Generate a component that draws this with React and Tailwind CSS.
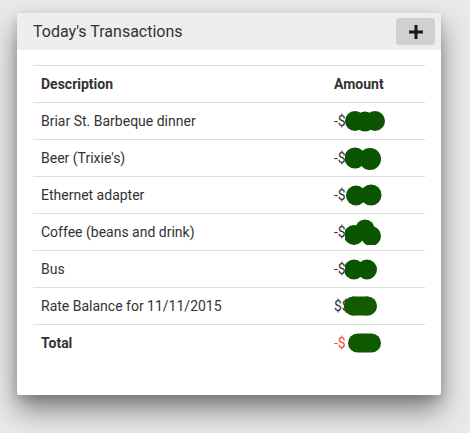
import React from "react";

function Blob({ circles, w = 44, h = 26, color = "#0b5400" }) {
  return (
    <svg width={w} height={h} viewBox={`0 0 ${w} ${h}`} className="block">
      {circles.map((c, i) =>
        c.rect ? (
          <rect key={i} x={c.x} y={c.y} width={c.w} height={c.h} rx={c.h / 2} fill={color} />
        ) : (
          <circle key={i} cx={c.x} cy={c.y} r={c.r} fill={color} />
        )
      )}
    </svg>
  );
}

const rows = [
  { d: "Briar St. Barbeque dinner", p: "-$", blob: [{ x: 10, y: 13, r: 10 }, { x: 20, y: 13.5, r: 10 }, { x: 30, y: 13, r: 10 }] },
  { d: "Beer (Trixie's)", p: "-$", blob: [{ x: 10, y: 13, r: 10.5 }, { x: 25, y: 14, r: 11 }] },
  { d: "Ethernet adapter", p: "-$", blob: [{ x: 11, y: 13.5, r: 10 }, { x: 26, y: 13, r: 10.5 }] },
  { d: "Coffee (beans and drink)", p: "-$", blob: [{ x: 9, y: 16, r: 10 }, { x: 20, y: 10, r: 9.5 }, { x: 26, y: 17, r: 10 }] },
  { d: "Bus", p: "-$", blob: [{ x: 9, y: 13.5, r: 10 }, { x: 22, y: 13.5, r: 10 }] },
  { d: "Rate Balance for 11/11/2015", p: "$$", blob: [{ x: 9.5, y: 13, r: 9.5 }, { x: 23, y: 13, r: 9.5 }, { rect: true, x: 0, y: 3.5, w: 33, h: 19 }], color: "#145a00", ml: "-ml-[6px]" },
];

export default function App() {
  return (
    <div
      className="w-[470px] h-[433px] bg-[#e9e9e9] pt-[13px] pl-[17px]"
      style={{ fontFamily: "Roboto, 'Liberation Sans', sans-serif" }}
    >
      <div className="w-[424px] h-[382px] bg-white rounded-[2px] shadow-[0_15px_28px_rgba(0,0,0,0.45),0_4px_10px_rgba(0,0,0,0.15)]">
        <div className="h-[37px] bg-[#eeeeee] flex items-center justify-between pl-4 pr-[6px]">
          <span className="text-[16px] text-[#333333]">Today's Transactions</span>
          <div className="w-[39px] h-[27px] bg-[#d0d0d0] rounded-[3px] flex items-center justify-center">
            <svg width="14" height="14" viewBox="0 0 14 14">
              <rect x="5.5" y="0" width="3" height="14" fill="#1a1a1a" />
              <rect x="0" y="5.5" width="14" height="3" fill="#1a1a1a" />
            </svg>
          </div>
        </div>
        <div className="px-4 pt-[15px]">
          <div className="border-t border-[#dddddd] text-[14px] text-[#333333]">
            <div className="h-[36px] flex items-center font-bold">
              <div className="w-[301px] pl-2">Description</div>
              <div>Amount</div>
            </div>
            {rows.map((r, i) => (
              <div key={i} className="h-[37px] flex items-center border-t border-[#dddddd]">
                <div className="w-[301px] pl-2">{r.d}</div>
                <div className="flex items-center">
                  <span>{r.p}</span>
                  <div className={r.ml || "-ml-[1px]"}>
                    <Blob circles={r.blob} color={r.color} />
                  </div>
                </div>
              </div>
            ))}
            <div className="h-[37px] flex items-center border-t border-[#dddddd] font-bold">
              <div className="w-[301px] pl-2">Total</div>
              <div className="flex items-center font-normal">
                <span className="text-[#f04848]">-$</span>
                <div className="ml-[2px]">
                  <Blob circles={[{ rect: true, x: 0, y: 3.5, w: 33, h: 19 }]} color="#0f5a00" />
                </div>
              </div>
            </div>
          </div>
        </div>
      </div>
    </div>
  );
}
